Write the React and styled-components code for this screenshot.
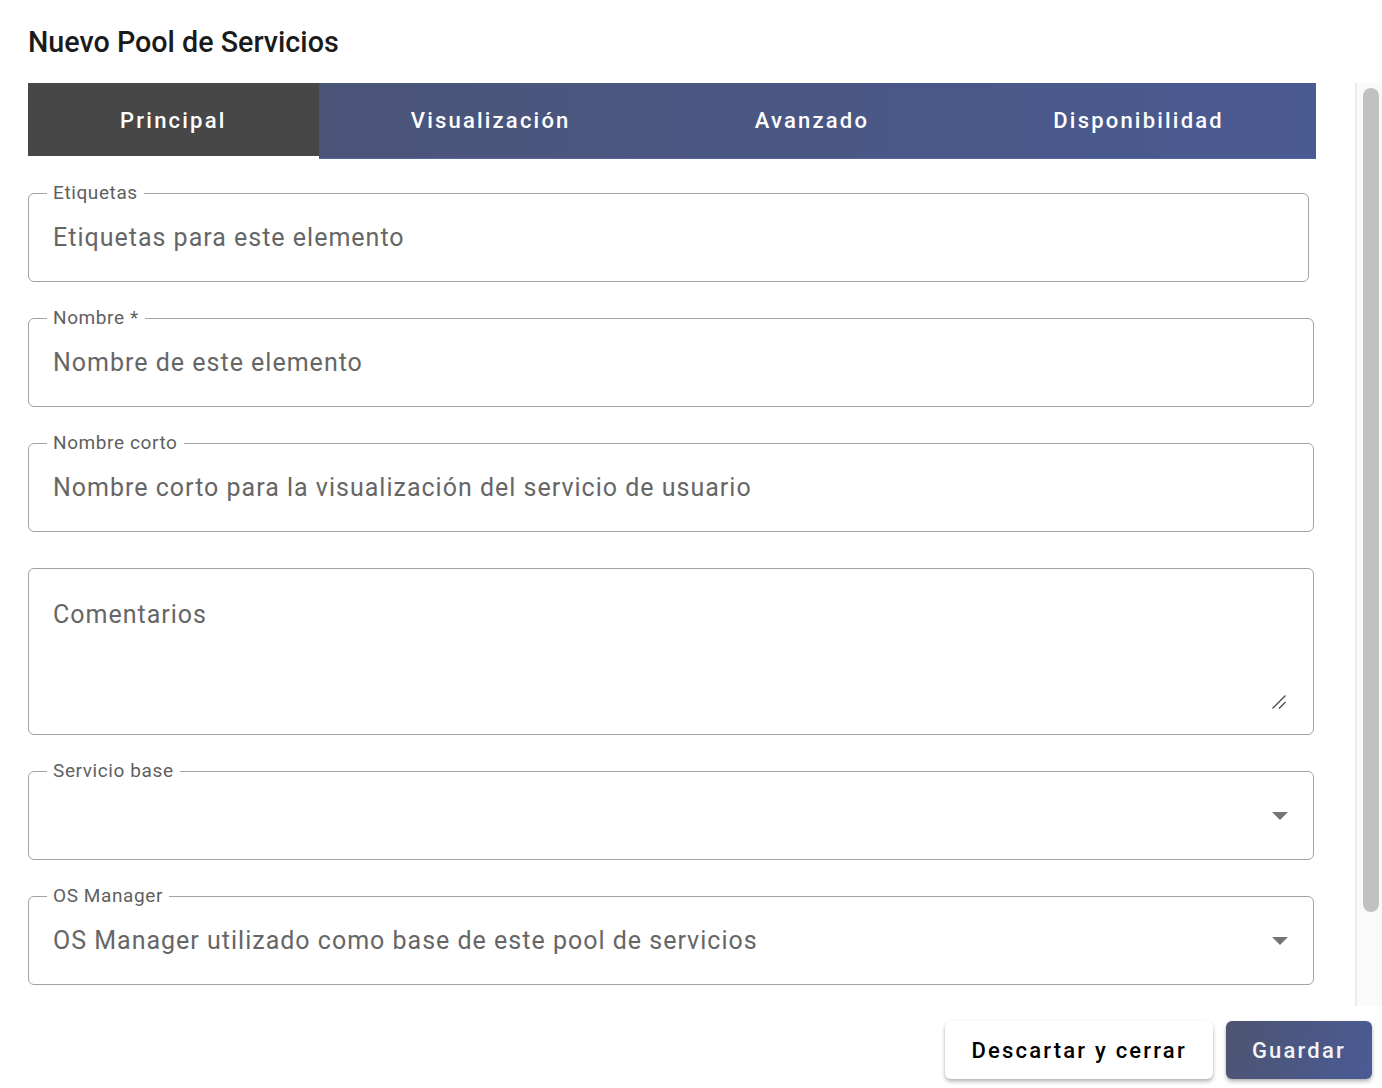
import React from "react";
import styled, { createGlobalStyle, css } from "styled-components";

const GlobalStyle = createGlobalStyle`
  html, body {
    margin: 0;
    padding: 0;
    background: #ffffff;
    font-family: Roboto, "Liberation Sans", sans-serif;
  }
  * { box-sizing: border-box; }
`;

const Page = styled.div`
  width: 1382px;
  height: 1088px;
  display: flex;
  flex-direction: column;
  overflow: hidden;
`;

const Title = styled.h2`
  margin: 0;
  padding: 24px 28px 0;
  height: 83px;
  font-size: 28.7px;
  line-height: 36px;
  font-weight: 500;
  color: #1b1b1b;
`;

const Body = styled.div`
  height: 923px;
  display: flex;
`;

const Content = styled.div`
  flex: 1;
  overflow: hidden;
  padding: 0 39px 0 28px;
`;

const ScrollTrack = styled.div`
  width: 27px;
  background: #fafafa;
  border-left: 2px solid #ececec;
  padding: 5px 3px 0 6px;
`;

const ScrollThumb = styled.div`
  height: 824px;
  border-radius: 8px;
  background: #c1c1c1;
`;

const TabBar = styled.div`
  display: flex;
  height: 76px;
  background: linear-gradient(90deg, #4b5370 0%, #4a5a92 100%);
  border-bottom: 1px solid #5766a8;
`;

const Tab = styled.div`
  flex: 1 1 auto;
  display: flex;
  align-items: center;
  justify-content: center;
  padding: 0 92px;
  font-size: 22px;
  font-weight: 500;
  letter-spacing: 2.2px;
  color: #ffffff;
  position: relative;
  ${(p) =>
    p.active &&
    css`
      background: #474747;
      &::after {
        content: "";
        position: absolute;
        left: 0;
        right: 0;
        bottom: -1px;
        height: 3px;
        background: #ffffff;
      }
    `}
`;

const Form = styled.div`
  display: flex;
  flex-direction: column;
  gap: 36px;
  padding-top: 34px;
`;

const Field = styled.div`
  position: relative;
  height: ${(p) => p.h || 89}px;
  margin-right: ${(p) => (p.narrow ? "7px" : "2px")};
  padding: ${(p) => (p.textarea ? "31px 24px 0" : "0 24px")};
  border: 1px solid #a3a3a3;
  border-radius: 6px;
  display: flex;
  align-items: ${(p) => (p.textarea ? "flex-start" : "center")};
`;

const Label = styled.span`
  position: absolute;
  top: -12px;
  left: 18px;
  padding: 0 6px;
  background: #ffffff;
  font-size: 19px;
  line-height: 22px;
  color: #5f5f5f;
  letter-spacing: 0.6px;
`;

const Value = styled.div`
  flex: 1;
  font-size: 25px;
  line-height: 30px;
  color: #666666;
  letter-spacing: 1px;
  white-space: nowrap;
`;

const Arrow = styled.span`
  width: 0;
  height: 0;
  border-left: 8px solid transparent;
  border-right: 8px solid transparent;
  border-top: 8px solid #757575;
  margin-right: 1px;
`;

const Resize = styled.svg`
  position: absolute;
  right: 26px;
  bottom: 24px;
`;

const Footer = styled.div`
  flex: 1;
  display: flex;
  justify-content: flex-end;
  align-items: flex-start;
  gap: 13px;
  padding: 15px 10px 0 0;
`;

const Button = styled.button`
  height: 58px;
  padding: 0 26px;
  border: none;
  border-radius: 6px;
  font-family: Roboto, "Liberation Sans", sans-serif;
  font-size: 22px;
  font-weight: 500;
  letter-spacing: 2.2px;
  cursor: pointer;
  color: ${(p) => (p.primary ? "#f4f4f4" : "#000000")};
  background: ${(p) =>
    p.primary ? "linear-gradient(110deg, #4d5470 0%, #4a5b96 100%)" : "#ffffff"};
  box-shadow: 0 3px 4px rgba(0, 0, 0, 0.22), 0 1px 3px rgba(0, 0, 0, 0.12);
`;

const tabs = ["Principal", "Visualización", "Avanzado", "Disponibilidad"];

const fields = [
  { label: "Etiquetas", value: "Etiquetas para este elemento", narrow: true },
  { label: "Nombre *", value: "Nombre de este elemento" },
  { label: "Nombre corto", value: "Nombre corto para la visualización del servicio de usuario" },
];

export default function App() {
  return (
    <Page>
      <GlobalStyle />
      <Title>Nuevo Pool de Servicios</Title>
      <Body>
        <Content>
          <TabBar>
            {tabs.map((t, i) => (
              <Tab key={t} active={i === 0}>
                {t}
              </Tab>
            ))}
          </TabBar>
          <Form>
            {fields.map((f) => (
              <Field key={f.label} narrow={f.narrow}>
                <Label>{f.label}</Label>
                <Value>{f.value}</Value>
              </Field>
            ))}
            <Field h={167} textarea>
              <Value>Comentarios</Value>
              <Resize width="16" height="16" viewBox="0 0 16 16">
                <path d="M1.5 14.5 L14.5 1.5 M8 14.5 L14.5 8" stroke="#444" strokeWidth="1.2" fill="none" />
              </Resize>
            </Field>
            <Field>
              <Label>Servicio base</Label>
              <Value />
              <Arrow />
            </Field>
            <Field>
              <Label>OS Manager</Label>
              <Value>OS Manager utilizado como base de este pool de servicios</Value>
              <Arrow />
            </Field>
          </Form>
        </Content>
        <ScrollTrack>
          <ScrollThumb />
        </ScrollTrack>
      </Body>
      <Footer>
        <Button>Descartar y cerrar</Button>
        <Button primary>Guardar</Button>
      </Footer>
    </Page>
  );
}
